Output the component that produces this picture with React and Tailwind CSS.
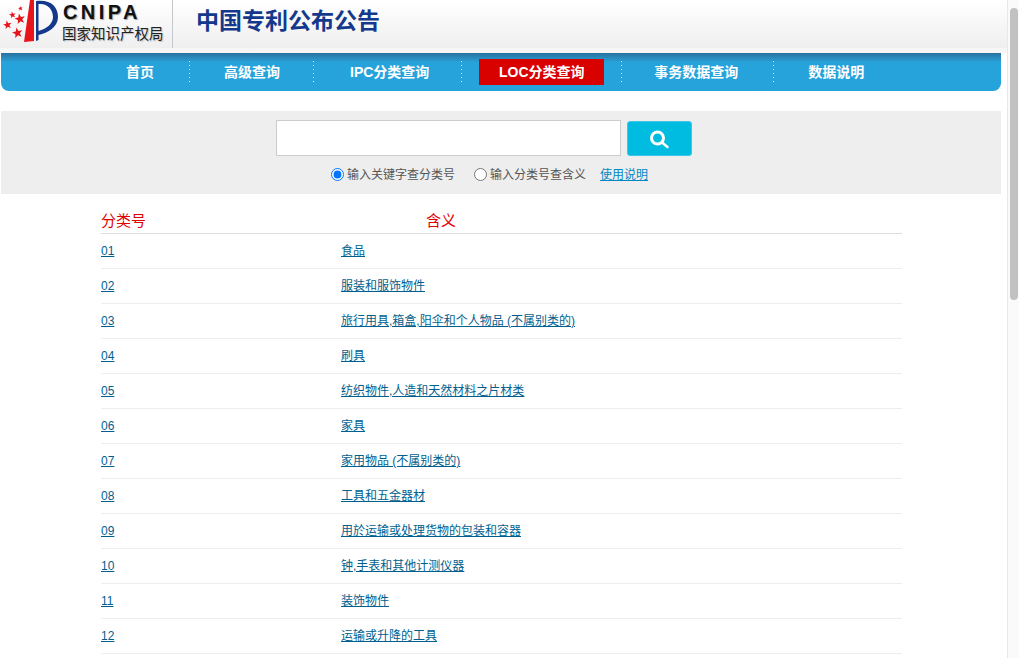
const rows = [
    ['01', '食品'],
    ['02', '服装和服饰物件'],
    ['03', '旅行用具,箱盒,阳伞和个人物品 (不属别类的)'],
    ['04', '刷具'],
    ['05', '纺织物件,人造和天然材料之片材类'],
    ['06', '家具'],
    ['07', '家用物品 (不属别类的)'],
    ['08', '工具和五金器材'],
    ['09', '用於运输或处理货物的包装和容器'],
    ['10', '钟,手表和其他计测仪器'],
    ['11', '装饰物件'],
    ['12', '运输或升降的工具'],
];

const stars = [
    [20, 19, 5.5],
    [17.5, 33, 5.5],
    [7.5, 25, 4.5],
    [12.5, 15, 3.5],
    [20.5, 8.5, 2.5],
];

function starPoints(cx, cy, r) {
    const points = [];
    for (let i = 0; i < 10; i++) {
        const radius = i % 2 === 0 ? r : r * 0.42;
        const angle = -Math.PI / 2 + (i * Math.PI) / 5 - 0.2;
        points.push(`${cx + radius * Math.cos(angle)},${cy + radius * Math.sin(angle)}`);
    }
    return points.join(' ');
}

function Logo() {
    return (
        <svg width="62" height="44" viewBox="0 0 62 44" className="shrink-0">
            <path d="M30 0 L34 0 L34 41 L24 42 Z" fill="#e8141c" />
            <path
                fillRule="evenodd"
                d="M36 1 C50 -1 58 6 58 17 C58 27 48 33 38.500 35 L38.500 40 L36 41 Z M38.500 4 C47 3 53 9 53 17 C53 24 46 29 38.500 31 Z"
                fill="#14388c"
            />
            {stars.map(star => (
                <polygon key={star[0] + star[1]} points={starPoints(star[0], star[1], star[2])} fill="#e8141c" />
            ))}
        </svg>
    );
}

function SearchIcon() {
    return (
        <svg width="20" height="20" viewBox="0 0 20 20" fill="none" stroke="#ffffff">
            <circle cx="7.500" cy="9" r="6" strokeWidth="3" />
            <path d="M12 13.500 L17.500 18" strokeWidth="2.500" strokeLinecap="round" />
        </svg>
    );
}

function NavSep({ className }) {
    return <span className={`h-[22px] w-[1px] bg-[repeating-linear-gradient(to_bottom,#ffffff_0,#ffffff_1px,transparent_1px,transparent_4px)] ${className}`} />;
}

export default function App() {
    return (
        <div className="flex h-screen overflow-hidden bg-white font-['Liberation_Sans','Noto_Sans_CJK_SC',sans-serif]">
            <div className="w-[1007px] shrink-0">
                <header className="h-[53px] bg-[#f6f6f6]">
                    <div className="flex h-[48px] items-stretch bg-gradient-to-b from-white to-[#efefef]">
                        <div className="flex w-[173px] overflow-hidden border-r border-[#c4c8cc]">
                            <Logo />
                            <div className="leading-none">
                                <div className="ml-[1px] h-[26px] text-[20px] leading-[25px] font-black tracking-[3.4px] text-[#111111] [text-shadow:1px_1px_1px_#999999]">CNIPA</div>
                                <div className="text-[14.500px] leading-[16px] whitespace-nowrap text-[#222222] [text-shadow:1px_1px_1px_#bbbbbb]">国家知识产权局</div>
                            </div>
                        </div>
                        <h1 className="ml-[23px] text-[23px] leading-[42px] font-bold text-[#14388c]">中国专利公布公告</h1>
                    </div>
                </header>

                <nav className="ml-[1px] flex h-[38px] w-[1000px] items-center rounded-b-[8px] bg-gradient-to-b from-[#28729f] via-[#27a3db] via-[25%] to-[#27a3db] text-[14px] font-bold text-white">
                    <span className="ml-[125px]">首页</span>
                    <NavSep className="ml-[35px]" />
                    <span className="ml-[34px]">高级查询</span>
                    <NavSep className="ml-[33px]" />
                    <span className="ml-[36px]">IPC分类查询</span>
                    <NavSep className="ml-[32px]" />
                    <span className="ml-[17px] flex h-[26px] w-[125px] items-center justify-center bg-[#d90000]">LOC分类查询</span>
                    <NavSep className="ml-[17px]" />
                    <span className="ml-[32px]">事务数据查询</span>
                    <NavSep className="ml-[35px]" />
                    <span className="ml-[34px]">数据说明</span>
                </nav>

                <section className="ml-[1px] mt-[20px] flex h-[83px] w-[1000px] flex-col bg-[#eeeeee]">
                    <div className="ml-[275px] mt-[9px] flex gap-[6px]">
                        <input type="text" className="h-[36px] w-[345px] border border-[#cccccc] bg-white" />
                        <button type="button" className="mt-[1px] flex h-[35px] w-[65px] items-center justify-center rounded-[3px] border border-[#3cc8e4] bg-[#00bce0]">
                            <SearchIcon />
                        </button>
                    </div>
                    <div className="ml-[330px] mt-[11px] flex items-center text-[12px] leading-[16px] text-[#555555]">
                        <input type="radio" name="mode" defaultChecked className="m-0 mb-[2px] h-[13px] w-[13px]" />
                        <span className="ml-[3px]">输入关键字查分类号</span>
                        <input type="radio" name="mode" className="m-0 mb-[2px] ml-[19px] h-[13px] w-[13px]" />
                        <span className="ml-[3px]">输入分类号查含义</span>
                        <a href="#" className="ml-[14px] text-[#0088c4] underline">使用说明</a>
                    </div>
                </section>

                <div className="ml-[101px] w-[801px]">
                    <div className="grid h-[40px] grid-cols-[240px_1fr] items-end border-b border-[#dddddd] pb-[1px] text-[15px] leading-[22px] text-[#e00000]">
                        <span>分类号</span>
                        <span className="pl-[85px]">含义</span>
                    </div>
                    {rows.map(row => (
                        <div key={row[0]} className="grid h-[35px] grid-cols-[240px_1fr] items-center border-b border-[#eeeeee] text-[12px] text-[#005f8f]">
                            <a href="#" className="justify-self-start underline">{row[0]}</a>
                            <a href="#" className="justify-self-start underline">{row[1]}</a>
                        </div>
                    ))}
                </div>
            </div>

            <div className="w-[12px] shrink-0 border-l border-[#e8e8e8] bg-[#fafafa] pl-[2px] pt-[8px]">
                <div className="h-[292px] w-[8px] rounded-full bg-[#c1c1c1]" />
            </div>
        </div>
    );
}
